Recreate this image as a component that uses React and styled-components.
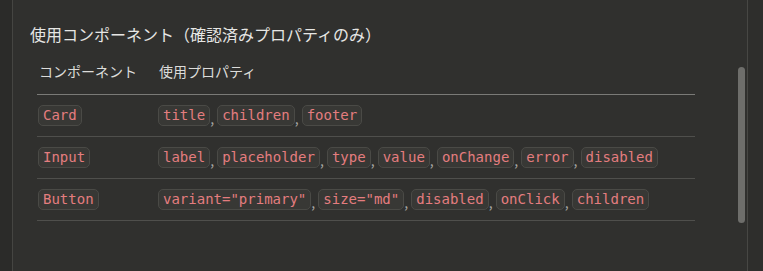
import React from 'react';
import styled, { createGlobalStyle } from 'styled-components';

const GlobalStyle = createGlobalStyle`
  html, body {
    margin: 0;
    padding: 0;
    background: #2b2b29;
    overflow: hidden;
  }
`;

const components = [
  { name: 'Card', props: ['title', 'children', 'footer'] },
  { name: 'Input', props: ['label', 'placeholder', 'type', 'value', 'onChange', 'error', 'disabled'] },
  { name: 'Button', props: ['variant="primary"', 'size="md"', 'disabled', 'onClick', 'children'] },
];

const App = () => {
  return (
    <>
      <GlobalStyle />
      <Page>
        <Gutter />
        <Main>
          <Content>
            <Heading>使用コンポーネント（確認済みプロパティのみ）</Heading>
            <Table>
              <thead>
                <tr>
                  <HeadCell>コンポーネント</HeadCell>
                  <HeadCell>使用プロパティ</HeadCell>
                </tr>
              </thead>
              <tbody>
                {components.map(c => (
                  <tr key={c.name}>
                    <Cell>
                      <CellInner><Code>{c.name}</Code></CellInner>
                    </Cell>
                    <Cell>
                      <CellInner>
                        {c.props.map((p, i) => (
                          <React.Fragment key={p}>
                            {i > 0 && <Comma>, </Comma>}
                            <Code>{p}</Code>
                          </React.Fragment>
                        ))}
                      </CellInner>
                    </Cell>
                  </tr>
                ))}
              </tbody>
            </Table>
            <NextHeading>コンポーネント構成</NextHeading>
          </Content>
          <ScrollTrack>
            <Thumb />
          </ScrollTrack>
        </Main>
        <RightEdge />
      </Page>
    </>
  );
};

const Page = styled.div`
  display: flex;
  height: 271px;
  overflow: hidden;
  font-family: "Noto Sans CJK JP", "Noto Sans", sans-serif;
`;

const Gutter = styled.div`
  width: 12px;
  flex-shrink: 0;
  background: #2b2b29;
  border-right: 1px solid #454542;
`;

const Main = styled.div`
  flex: 1;
  display: flex;
  background: #30302e;
  border-right: 1px solid #474744;
`;

const Content = styled.div`
  flex: 1;
  padding: 22px 0 0 17px;
`;

const Heading = styled.h3`
  margin: 0 0 12px 0;
  font-size: 16px;
  line-height: 24px;
  font-weight: 400;
  color: #e6e6e4;
`;

const NextHeading = styled(Heading)`
  margin-top: 45px;
`;

const Table = styled.table`
  margin-left: 7px;
  width: 658px;
  border-collapse: collapse;
`;

const HeadCell = styled.th`
  text-align: left;
  font-weight: 400;
  font-size: 14px;
  line-height: 20px;
  color: #dcdcda;
  padding: 3px 0 13px 2px;
  border-bottom: 1px solid #7a7a77;
  &:first-child {
    width: 118px;
  }
`;

const Cell = styled.td`
  padding: 0 0 0 1px;
  height: 41px;
  border-bottom: 1px solid #4f4f4c;
`;

const CellInner = styled.div`
  display: flex;
  align-items: center;
  white-space: nowrap;
  font-size: 14px;
  color: #a8a8a5;
`;

const Code = styled.code`
  display: inline-block;
  font-family: "DejaVu Sans Mono", monospace;
  font-size: 14px;
  line-height: 19px;
  padding: 0 4px;
  color: #e47d7f;
  background: #383835;
  border: 1px solid #4a4a46;
  border-radius: 5px;
`;

const Comma = styled.span`
  white-space: pre;
  font-size: 14px;
  line-height: 19px;
  padding-top: 6px;
`;

const ScrollTrack = styled.div`
  width: 12px;
  flex-shrink: 0;
  padding-top: 67px;
`;

const Thumb = styled.div`
  width: 7px;
  height: 156px;
  margin-left: 3px;
  border-radius: 4px;
  background: #6e6e6b;
`;

const RightEdge = styled.div`
  width: 15px;
  flex-shrink: 0;
  background: #2e2e2c;
`;

export default App;
